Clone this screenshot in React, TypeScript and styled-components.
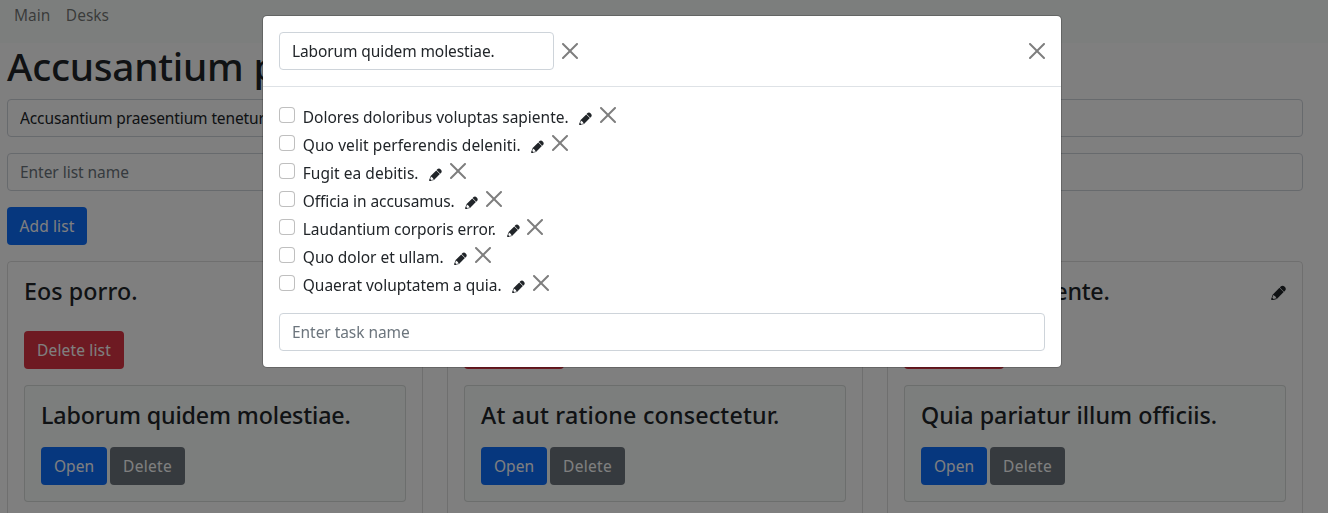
import React from 'react';
import styled, { createGlobalStyle } from 'styled-components';

const GlobalStyle = createGlobalStyle`
  *, *::before, *::after { box-sizing: border-box; }
  html, body { margin: 0; height: 100%; overflow: hidden; }
  body {
    background: #fff;
    color: #212529;
    font-family: "Noto Sans", "Open Sans", sans-serif;
    font-size: 15.5px;
    line-height: 24px;
  }
  button, input { font: inherit; }
`;

const Page = styled.div`
  height: 513px;
  overflow: hidden;
`;

const Nav = styled.nav`
  display: flex;
  gap: 15.5px;
  height: 43px;
  padding: 3px 14px 0;
  background: #f8fcfa;
`;

const NavLink = styled.a`
  color: rgba(0, 0, 0, 0.55);
`;

const Content = styled.main`
  display: flex;
  flex-direction: column;
  align-items: flex-start;
  width: 1303px;
  padding-left: 7px;
`;

const Heading = styled.h1`
  height: 48px;
  margin: 0 0 8px;
  font-size: 38.75px;
  font-weight: 540;
  line-height: 46px;
  letter-spacing: -0.25px;
  white-space: nowrap;
`;

const Input = styled.input<{ $width?: string; $gap?: number; $track?: number }>`
  display: block;
  width: ${(p) => p.$width ?? '100%'};
  height: 38px;
  margin: 0 0 ${(p) => p.$gap ?? 0}px;
  padding: 6px 12px;
  border: 1px solid #ced4da;
  border-radius: 4px;
  background: #fff;
  color: #212529;
  letter-spacing: ${(p) => p.$track ?? 0}px;
  outline: none;

  &::placeholder {
    color: #6c757d;
    opacity: 1;
  }
`;

const Button = styled.button<{ $color: string; $width: number; $track?: number }>`
  width: ${(p) => p.$width}px;
  height: 38px;
  padding: 0;
  border: 0;
  border-radius: 4px;
  background: ${(p) => p.$color};
  color: #fff;
  letter-spacing: ${(p) => p.$track ?? 0}px;
  white-space: nowrap;
`;

const Board = styled.section`
  display: grid;
  grid-template-columns: repeat(3, 1fr);
  gap: 24px;
  width: 100%;
  margin-top: 16px;
`;

const ListCard = styled.article`
  height: 300px;
  padding: 16px;
  border: 1px solid rgba(0, 0, 0, 0.125);
  border-radius: 4px;
`;

const ListHeader = styled.header`
  display: flex;
  justify-content: space-between;
  height: 53px;
`;

const Title = styled.h4<{ $track?: number }>`
  height: 29px;
  margin: 0;
  font-size: 23.25px;
  font-weight: 540;
  line-height: 26px;
  letter-spacing: ${(p) => p.$track ?? 0}px;
  white-space: nowrap;
`;

const EditButton = styled.span<{ $top: number }>`
  display: block;
  margin-top: ${(p) => p.$top}px;
  line-height: 0;
`;

const TaskCard = styled.div`
  height: 117px;
  margin-top: 16px;
  padding: 16px;
  border: 1px solid rgba(0, 0, 0, 0.125);
  border-radius: 4px;
  background: #f8fcfa;
`;

const Actions = styled.div`
  display: flex;
  gap: 3px;
  margin-top: 16px;
`;

const Backdrop = styled.div`
  position: fixed;
  inset: 0;
  background: rgba(0, 0, 0, 0.5);
`;

const Modal = styled.div`
  position: fixed;
  top: 15px;
  left: 262px;
  width: 800px;
  height: 353px;
  border: 1px solid rgba(0, 0, 0, 0.2);
  border-radius: 5px;
  background: #fff;
  background-clip: padding-box;
`;

const ModalHeader = styled.header`
  display: flex;
  align-items: flex-start;
  height: 71px;
  padding: 16px;
  border-bottom: 1px solid #dee2e6;
`;

const CloseButton = styled.span<{ $margin: string }>`
  display: block;
  width: 16px;
  height: 16px;
  margin: ${(p) => p.$margin};
  line-height: 0;
  opacity: 0.5;
`;

const ModalBody = styled.div`
  padding: 16px;
`;

const TaskRow = styled.div`
  display: flex;
  align-items: flex-start;
  height: 28px;
`;

const Checkbox = styled.input`
  appearance: none;
  width: 16px;
  height: 16px;
  margin: 4px 7.8px 0 0;
  border: 1px solid rgba(0, 0, 0, 0.25);
  border-radius: 4px;
  background: #fff;
`;

const TaskName = styled.span<{ $track: number }>`
  margin: 2px 10.7px 0 0;
  letter-spacing: ${(p) => p.$track}px;
  white-space: nowrap;
`;

const Footer = styled.div`
  margin-top: 14px;
`;

function Pencil({ size }: { size: number }) {
  return (
    <svg width={size} height={size} viewBox="0 0 16 16" fill="#212529">
      <g transform="translate(0.3 15.7) rotate(-45)">
        <path d="M0 0 L1 -1.1 L2.6 -1.8 L2.6 1.8 L1 1.1 Z" />
        <path d="M2.6 -1.8 L5 -3.1 L5 -2.2 L2.6 -0.9 Z M2.6 1.8 L5 3.1 L5 2.2 L2.6 0.9 Z" />
        <path d="M5 -3.1 H15 V3.1 H5 L5.8 0 Z" />
        <path d="M15.6 -3.1 H17.2 Q19.6 -2.8 19.6 0 Q19.6 2.8 17.2 3.1 H15.6 Z" />
      </g>
    </svg>
  );
}

function Cross() {
  return (
    <svg width="16" height="16" viewBox="0 0 16 16">
      <path d="M.293.293a1 1 0 011.414 0L8 6.586 14.293.293a1 1 0 111.414 1.414L9.414 8l6.293 6.293a1 1 0 01-1.414 1.414L8 9.414l-6.293 6.293a1 1 0 01-1.414-1.414L6.586 8 .293 1.707a1 1 0 010-1.414z" />
    </svg>
  );
}

const lists = [
  { title: 'Eos porro.', track: 0.07, card: 'Laborum quidem molestiae.', cardTrack: -0.14 },
  { title: 'Aut optio.', track: 0, card: 'At aut ratione consectetur.', cardTrack: 0.19 },
  { title: 'Et harum sapiente.', track: -0.25, card: 'Quia pariatur illum officiis.', cardTrack: 0.04 },
];

const tasks = [
  { name: 'Dolores doloribus voluptas sapiente.', track: -0.01 },
  { name: 'Quo velit perferendis deleniti.', track: 0.07 },
  { name: 'Fugit ea debitis.', track: 0.03 },
  { name: 'Officia in accusamus.', track: -0.08 },
  { name: 'Laudantium corporis error.', track: -0.06 },
  { name: 'Quo dolor et ullam.', track: -0.02 },
  { name: 'Quaerat voluptatem a quia.', track: -0.04 },
];

export default function App() {
  return (
    <>
      <GlobalStyle />
      <Page>
        <Nav>
          <NavLink>Main</NavLink>
          <NavLink>Desks</NavLink>
        </Nav>
        <Content>
          <Heading>Accusantium praesentium tenetur.</Heading>
          <Input $gap={16} $track={-0.12} defaultValue="Accusantium praesentium tenetur." />
          <Input $gap={16} $track={-0.04} placeholder="Enter list name" />
          <Button $color="#0d6efd" $width={80} $track={0.1}>Add list</Button>
          <Board>
            {lists.map((list) => (
              <ListCard key={list.title}>
                <ListHeader>
                  <Title $track={list.track}>{list.title}</Title>
                  <EditButton $top={6.5}><Pencil size={15.5} /></EditButton>
                </ListHeader>
                <Button $color="#dc3545" $width={100} $track={0.16}>Delete list</Button>
                <TaskCard>
                  <Title $track={list.cardTrack}>{list.card}</Title>
                  <Actions>
                    <Button $color="#0d6efd" $width={66}>Open</Button>
                    <Button $color="#6c757d" $width={75} $track={0.3}>Delete</Button>
                  </Actions>
                </TaskCard>
              </ListCard>
            ))}
          </Board>
        </Content>
      </Page>
      <Backdrop />
      <Modal>
        <ModalHeader>
          <Input $width="275px" $track={-0.11} defaultValue="Laborum quidem molestiae." />
          <CloseButton $margin="11px 0 0 8px"><Cross /></CloseButton>
          <CloseButton $margin="11px 0 0 auto"><Cross /></CloseButton>
        </ModalHeader>
        <ModalBody>
          {tasks.map((task) => (
            <TaskRow key={task.name}>
              <Checkbox type="checkbox" />
              <TaskName $track={task.track}>{task.name}</TaskName>
              <EditButton $top={8.7}><Pencil size={13.3} /></EditButton>
              <CloseButton $margin="4px 0 0 7.4px"><Cross /></CloseButton>
            </TaskRow>
          ))}
          <Footer>
            <Input $track={-0.05} placeholder="Enter task name" />
          </Footer>
        </ModalBody>
      </Modal>
    </>
  );
}
